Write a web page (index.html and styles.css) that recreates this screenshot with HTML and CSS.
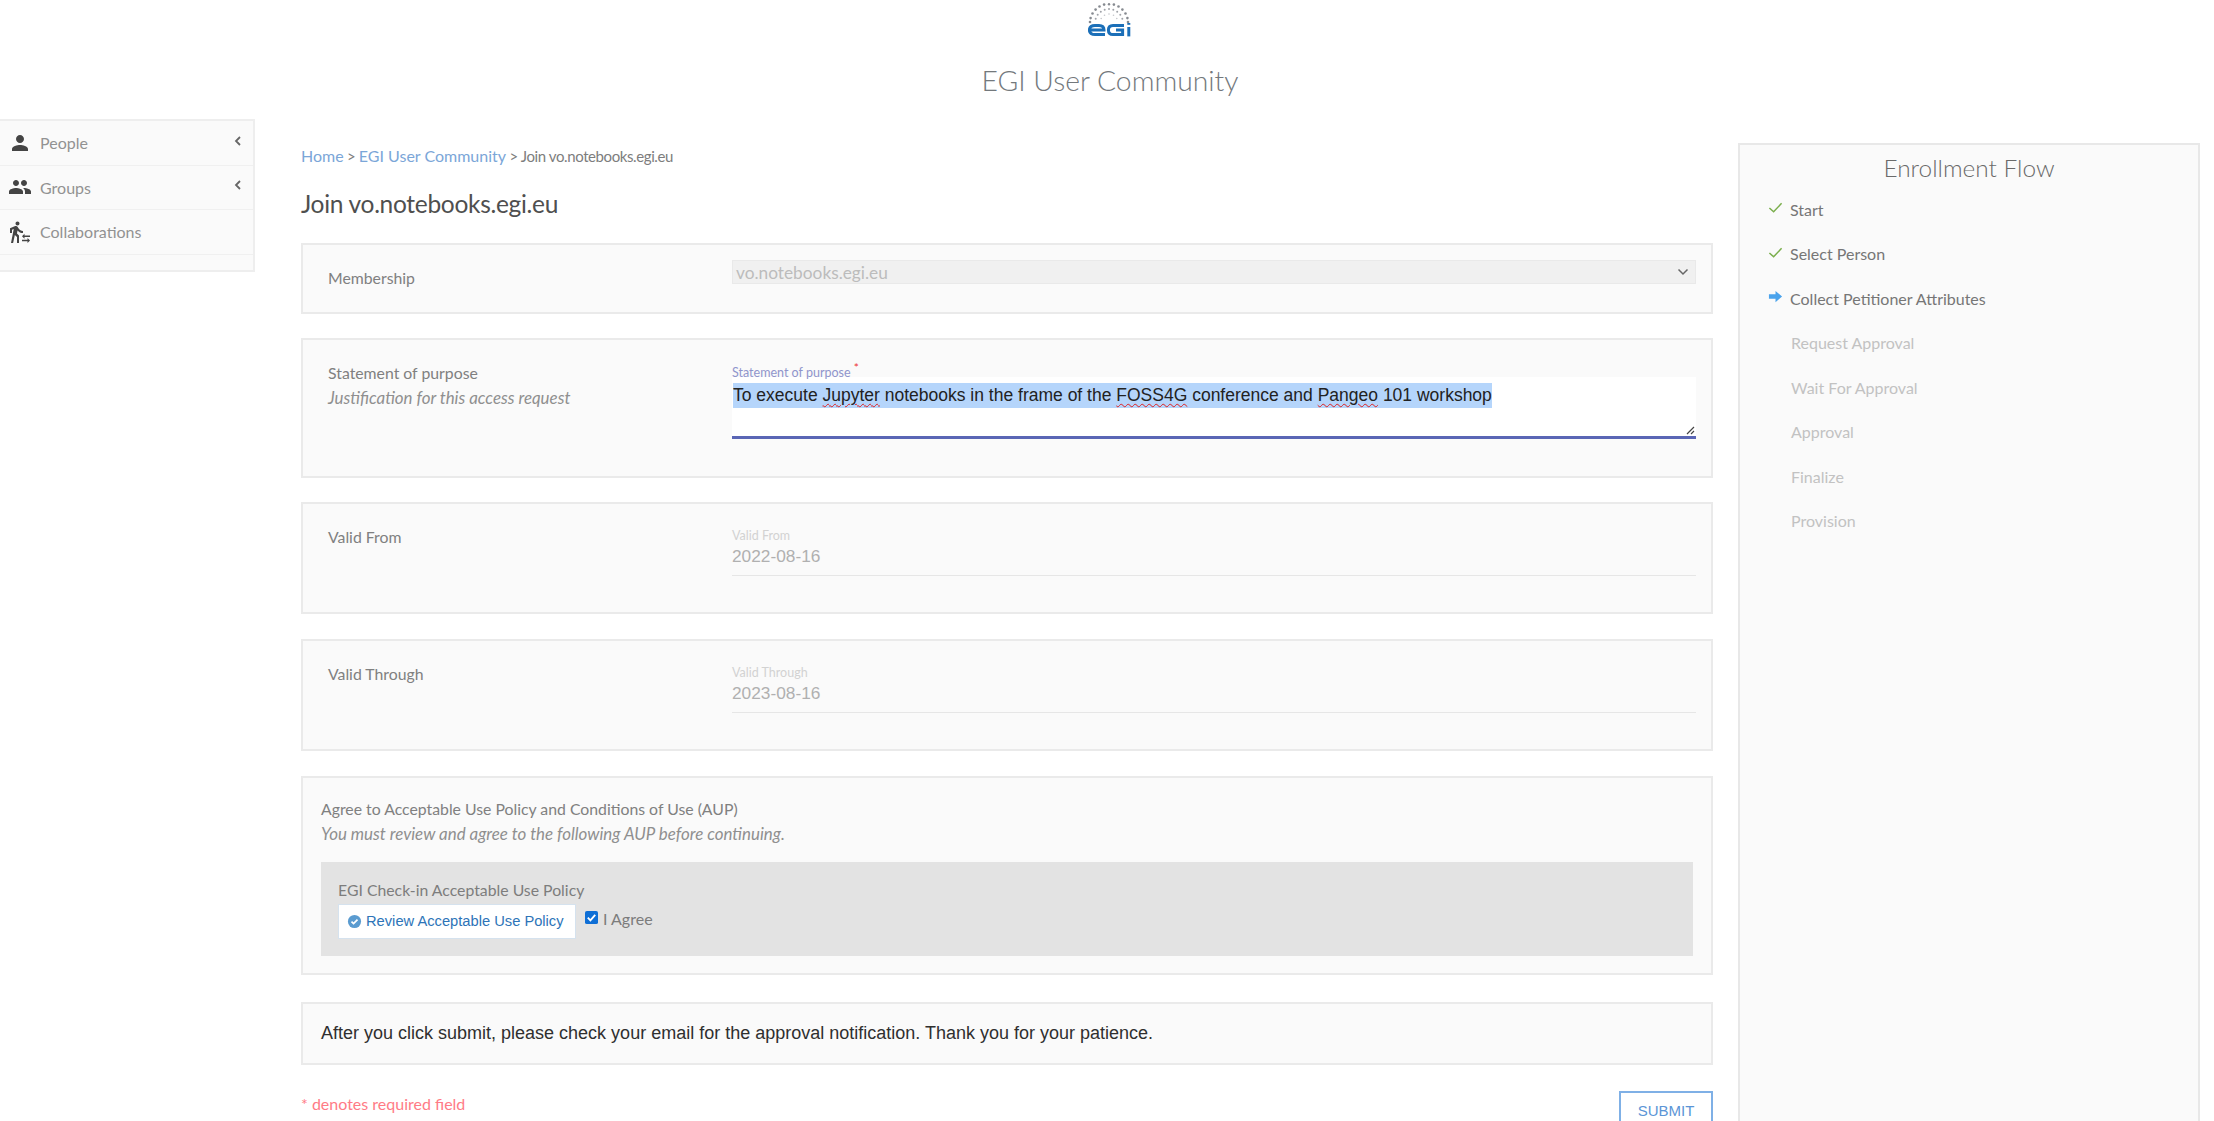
FILE: index.html
```html
<!DOCTYPE html>
<html lang="en">
<head>
<meta charset="utf-8">
<title>Join vo.notebooks.egi.eu</title>
<link rel="stylesheet" href="styles.css">
</head>
<body>
<header class="top">
  <svg class="logo" viewBox="0 0 44 34" width="44" height="34" aria-label="EGI logo">
    <g fill="#868a90">
      <circle cx="2" cy="19" r="1.300"/><circle cx="2.600" cy="15.100" r="1.300"/><circle cx="4.500" cy="10.500" r="1.300"/><circle cx="7.600" cy="6.600" r="1.300"/><circle cx="11.500" cy="3.500" r="1.300"/><circle cx="16.100" cy="1.600" r="1.300"/><circle cx="21" cy="1.200" r="1.200"/><circle cx="25.900" cy="1.600" r="1.300"/><circle cx="30.500" cy="3.500" r="1.300"/><circle cx="34.400" cy="6.600" r="1.300"/><circle cx="37.500" cy="10.500" r="1.300"/><circle cx="39.400" cy="15.100" r="1.300"/><circle cx="40" cy="19" r="1.300"/>
    </g>
    <g fill="#a0a3a9">
      <circle cx="7.700" cy="15.700" r="1"/><circle cx="9.700" cy="11.800" r="1"/><circle cx="12.800" cy="8.700" r="1"/><circle cx="16.700" cy="6.700" r="1"/><circle cx="21" cy="6" r="1"/><circle cx="25.300" cy="6.700" r="1"/><circle cx="29.200" cy="8.700" r="1"/><circle cx="32.300" cy="11.800" r="1"/><circle cx="34.300" cy="15.700" r="1"/>
    </g>
    <g fill="#c4c6ca">
      <circle cx="13.200" cy="15.500" r=".8"/><circle cx="16.500" cy="12.200" r=".8"/><circle cx="21" cy="11" r=".8"/><circle cx="25.500" cy="12.200" r=".8"/><circle cx="28.800" cy="15.500" r=".8"/>
    </g>
    <g fill="none" stroke="#1b6fb8" stroke-width="3">
      <path d="M2 27h14c0-3-2-4.600-5-4.600H7c-3.500 0-5.600 1.600-5.600 4.600s2.100 4.600 5.600 4.600h10"/>
      <path d="M36 22.400H25c-3 0-4.600 1.600-4.600 4.600s1.600 4.600 4.600 4.600h9.600V27H28"/>
      <path d="M40.800 24v9.400"/>
      <path d="M40.800 20v1.800"/>
    </g>
  </svg>
  <h1 class="site-title">EGI User Community</h1>
</header>

<div class="layout">
  <nav class="sidebar">
    <a class="nav-item">
      <svg class="nav-icon" viewBox="0 0 24 24"><path d="M12 12c2.210 0 4-1.790 4-4s-1.790-4-4-4-4 1.790-4 4 1.790 4 4 4zm0 2c-2.670 0-8 1.340-8 4v2h16v-2c0-2.660-5.330-4-8-4z"/></svg>
      <span class="nav-label">People</span>
      <svg class="nav-chevron" viewBox="0 0 10 12"><path d="M7 2 3 6l4 4"/></svg>
    </a>
    <a class="nav-item">
      <svg class="nav-icon" viewBox="0 0 24 24"><path d="M16 11c1.660 0 2.990-1.340 2.990-3S17.660 5 16 5c-1.660 0-3 1.340-3 3s1.340 3 3 3zm-8 0c1.660 0 2.990-1.340 2.990-3S9.660 5 8 5C6.340 5 5 6.340 5 8s1.340 3 3 3zm0 2c-2.330 0-7 1.170-7 3.500V19h14v-2.500c0-2.330-4.670-3.500-7-3.500zm8 0c-.290 0-.620.020-.970.050 1.160.840 1.970 1.970 1.970 3.450V19h6v-2.500c0-2.330-4.670-3.500-7-3.500z"/></svg>
      <span class="nav-label">Groups</span>
      <svg class="nav-chevron" viewBox="0 0 10 12"><path d="M7 2 3 6l4 4"/></svg>
    </a>
    <a class="nav-item">
      <svg class="nav-icon" viewBox="0 0 24 24"><path d="M16.490 15.500v-1.750L14 16.250l2.490 2.500V17H22v-1.500zm3.020 4.250H14v1.500h5.510V23L22 20.500 19.510 18zM9.500 5.500c1.100 0 2-.9 2-2s-.9-2-2-2-2 .9-2 2 .9 2 2 2zM5.750 8.900L3 23h2.100l1.750-8L9 17v6h2v-7.550L8.950 13.400l.6-3C10.850 12 12.800 13 15 13v-2c-1.850 0-3.450-1-4.350-2.450l-.95-1.600C9.350 6.350 8.700 6 8 6c-.25 0-.5.050-.75.1L2 8.300V13h2V9.650l1.750-.75z"/></svg>
      <span class="nav-label">Collaborations</span>
    </a>
  </nav>

  <main class="main">
    <div class="crumbs"><a>Home</a> &gt; <a>EGI User Community</a> &gt; Join vo.notebooks.egi.eu</div>
    <h2 class="page-title">Join vo.notebooks.egi.eu</h2>

    <section class="panel row h-membership">
      <div class="label-col"><div class="label">Membership</div></div>
      <div class="field-col">
        <div class="select">
          <span>vo.notebooks.egi.eu</span>
          <svg class="select-arrow" viewBox="0 0 12 8"><path d="M1.500 1.500 6 6l4.500-4.500"/></svg>
        </div>
      </div>
    </section>

    <section class="panel row h-purpose">
      <div class="label-col">
        <div class="label">Statement of purpose</div>
        <div class="hint">Justification for this access request</div>
      </div>
      <div class="field-col">
        <div class="mini active">Statement of purpose <sup class="req">*</sup></div>
        <div class="textarea">
          <span class="selected">To execute <u>Jupyter</u> notebooks in the frame of the <u>FOSS4G</u> conference and <u>Pangeo</u> 101 workshop</span>
          <svg class="grip" viewBox="0 0 10 10"><path d="M9 2 2 9M9 6 6 9"/></svg>
        </div>
      </div>
    </section>

    <section class="panel row h-date">
      <div class="label-col"><div class="label">Valid From</div></div>
      <div class="field-col">
        <div class="mini">Valid From</div>
        <div class="date-value">2022-08-16</div>
      </div>
    </section>

    <section class="panel row h-date">
      <div class="label-col"><div class="label">Valid Through</div></div>
      <div class="field-col">
        <div class="mini">Valid Through</div>
        <div class="date-value">2023-08-16</div>
      </div>
    </section>

    <section class="panel aup">
      <div class="label">Agree to Acceptable Use Policy and Conditions of Use (AUP)</div>
      <div class="hint">You must review and agree to the following AUP before continuing.</div>
      <div class="aup-box">
        <div class="aup-title">EGI Check-in Acceptable Use Policy</div>
        <div class="aup-actions">
          <a class="review-btn">
            <svg class="review-icon" viewBox="0 0 16 16"><circle cx="8" cy="8" r="7" fill="#5a9bd0"/><path d="M4.800 8.200 7 10.300l4.200-4.300" fill="none" stroke="#fff" stroke-width="1.800"/></svg>
            Review Acceptable Use Policy
          </a>
          <label class="agree">
            <svg class="checkbox" viewBox="0 0 14 14"><rect width="14" height="14" rx="2" fill="#0f6fd6"/><path d="M3 7.200 5.800 10 11 4.200" fill="none" stroke="#fff" stroke-width="2"/></svg>
            I Agree
          </label>
        </div>
      </div>
    </section>

    <section class="panel notice">After you click submit, please check your email for the approval notification. Thank you for your patience.</section>

    <div class="form-foot">
      <span class="required">* denotes required field</span>
      <button class="submit" type="button">SUBMIT</button>
    </div>
  </main>

  <aside class="flow">
    <h3 class="flow-title">Enrollment Flow</h3>
    <ul class="flow-list">
      <li class="done"><svg class="flow-icon" viewBox="0 0 16 16"><path d="M1.500 8.500 6 12.500 14.500 3.500" fill="none" stroke="#7aae4c" stroke-width="1.600"/></svg>Start</li>
      <li class="done"><svg class="flow-icon" viewBox="0 0 16 16"><path d="M1.500 8.500 6 12.500 14.500 3.500" fill="none" stroke="#7aae4c" stroke-width="1.600"/></svg>Select Person</li>
      <li class="done"><svg class="flow-icon" viewBox="0 0 16 16"><path d="M1 5.500h7V2l7 6-7 6v-3.500H1z" fill="#4ba3ec"/></svg>Collect Petitioner Attributes</li>
      <li class="todo">Request Approval</li>
      <li class="todo">Wait For Approval</li>
      <li class="todo">Approval</li>
      <li class="todo">Finalize</li>
      <li class="todo">Provision</li>
    </ul>
  </aside>
</div>
</body>
</html>
```
FILE: styles.css
```css
* { box-sizing: border-box; }
html, body { margin: 0; padding: 0; height: 1121px; overflow: hidden; background: #fff; }
body { font-family: Lato, "Liberation Sans", sans-serif; color: #6b6b6b; font-size: 16px; }

.top { height: 100px; display: flex; flex-direction: column; align-items: center; padding: 3px 0 0 6px; }
.logo { display: block; }
.site-title { margin: 26px 0 0; font-size: 28.300px; line-height: 34px; font-weight: 300; color: #73787c; }

.layout { display: flex; align-items: flex-start; }

.sidebar { width: 255px; height: 153px; margin-top: 19px; background: #fafafa; border: 2px solid #eee; border-left: 0; }
.nav-item { display: flex; align-items: center; height: 44.500px; border-bottom: 1px solid #f0f0f0; padding: 0 10px 0 8px; color: #8d8d8d; }
.nav-icon { width: 24px; height: 24px; fill: #444; flex: none; }
.nav-label { margin-left: 8px; font-size: 16px; color: #929292; }
.nav-chevron { width: 10px; height: 12px; margin-left: auto; margin-top: -4px; fill: none; stroke: #666; stroke-width: 1.800; }

.main { width: 1412px; margin-left: 46px; padding-top: 46px; }
.crumbs { font-size: 15px; line-height: 20px; color: #7d7d7d; letter-spacing: -.4px; }
.crumbs a { color: #7ba6d8; font-size: 16px; letter-spacing: 0; }
.page-title { margin: 23px 0 24px; font-size: 24.500px; line-height: 30px; font-weight: 400; color: #4f4f4f; letter-spacing: -.3px; }

.panel { background: #fafafa; border: 2px solid #eaeaea; margin-bottom: 24.600px; }
.row { display: flex; }
.h-membership { height: 70.600px; }
.h-purpose { height: 139.500px; }
.h-date { height: 112.200px; }

.label-col { width: 429px; flex: none; padding: 21px 0 0 25px; }
.field-col { width: 964px; flex: none; }
.h-membership .field-col { padding-top: 15px; }
.h-purpose .field-col { padding-top: 26px; }
.h-date .field-col { padding-top: 25px; }

.label { font-size: 15.800px; line-height: 24px; color: #808080; }
.hint { font-size: 16.900px; line-height: 26px; font-style: italic; color: #8f8f8f; }

.select { height: 24px; background: #f0f0f0; border: 1px solid #e9e9e9; display: flex; align-items: center; padding-left: 3px; font-size: 17.300px; color: #bcbcbc; }
.select-arrow { width: 12px; height: 8px; margin-left: auto; margin-right: 6px; fill: none; stroke: #666; stroke-width: 1.500; }

.mini { position: relative; z-index: 1; font-size: 12.500px; line-height: 14px; color: #d2d2d2; }
.mini.active { color: #9095cc; }
.req { color: #e33; font-size: 12px; line-height: 0; }

.textarea { position: relative; height: 62px; margin-top: -3px; background: #fff; border-bottom: 3px solid #5a66b5; padding: 6px 1px; font-family: "Liberation Sans", sans-serif; font-size: 17.500px; line-height: 25px; color: #222; }
.selected { background: #b5d5fb; display: inline-block; }
.selected u { text-decoration: underline wavy #e02020; text-decoration-thickness: 1px; text-underline-offset: 2px; }
.grip { position: absolute; right: 1px; bottom: 1px; width: 10px; height: 10px; fill: none; stroke: #444; stroke-width: 1.200; }

.date-value { height: 33px; padding-top: 2px; border-bottom: 1px solid #e6e6e6; font-family: "Liberation Sans", sans-serif; font-size: 17.300px; line-height: 22px; color: #b0b0b0; }

.aup { height: 199px; padding: 19px 18px 0; margin-bottom: 27px; }
.aup-box { margin-top: 15px; height: 94px; background: #e3e3e3; padding: 17px 17px 0; }
.aup-title { font-size: 15.800px; line-height: 22px; color: #7d7d7d; }
.aup-actions { display: flex; align-items: flex-start; margin-top: 3px; }
.review-btn { display: flex; align-items: center; gap: 4px; width: 238px; height: 35px; padding-left: 8px; background: #fff; border: 1px solid #d5e2ee; font-family: "Liberation Sans", sans-serif; font-size: 14.700px; color: #2d74b8; }
.review-icon { width: 15px; height: 15px; flex: none; }
.agree { display: flex; align-items: center; margin: 5px 0 0 9px; gap: 5px; color: #7c7c7c; font-size: 16px; line-height: 20px; }
.checkbox { width: 13px; height: 13px; margin-top: -3px; }

.notice { height: 63px; padding: 0 18px; margin-bottom: 0; display: flex; align-items: center; font-family: "Liberation Sans", sans-serif; font-size: 18px; color: #2f2f2f; }

.form-foot { display: flex; justify-content: space-between; align-items: flex-start; padding-top: 26px; }
.required { color: #ff7b86; font-size: 16px; line-height: 20px; margin-top: 3px; }
.submit { width: 94px; height: 40px; background: #fff; border: 2px solid #7fb0e6; font-family: "Liberation Sans", sans-serif; font-size: 15px; color: #5b95d6; padding: 0; }

.flow { width: 462px; height: 1000px; margin: 43px 0 0 25px; background: #fafafa; border: 2px solid #e8e8e8; padding: 7px 0 0 28px; }
.flow-title { margin: 0 0 0 -28px; text-align: center; font-size: 24.400px; line-height: 32px; font-weight: 300; color: #6a6a6a; }
.flow-list { list-style: none; margin: 3px 0 0; padding: 0; }
.flow-list li { display: flex; align-items: center; height: 44.500px; font-size: 16px; padding-left: 22px; position: relative; }
.flow-icon { width: 15px; height: 15px; position: absolute; left: 0; top: 13px; }
.done { color: #767676; }
.todo { color: #c2c2c2; padding-left: 23px !important; }
```
